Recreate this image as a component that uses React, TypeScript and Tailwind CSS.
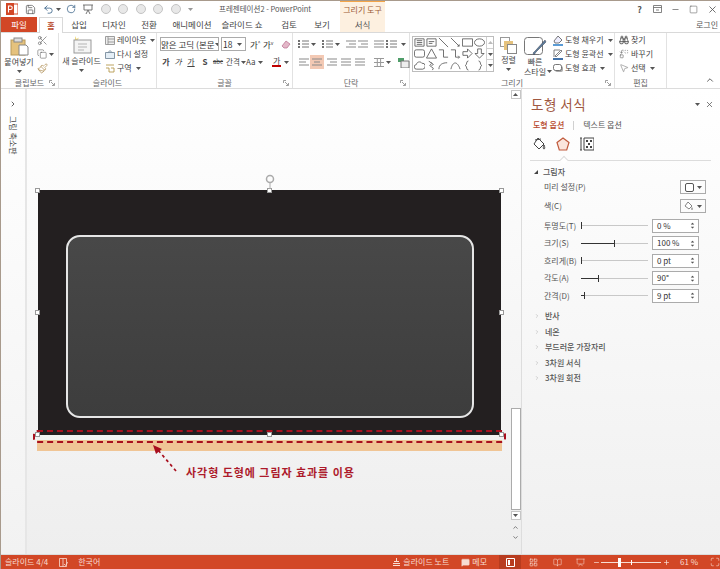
import React from "react";
import {
  Save, Undo2, RotateCw, Scissors, Copy, Paintbrush, Binoculars, MousePointer2, Replace, ChevronUp, X, Minus, Square,
  MessageSquare, LayoutGrid, BookOpen, Presentation, Maximize, ChevronDown, ChevronRight, Plus,
} from "lucide-react";

const font = "font-['Noto_Sans_CJK_KR','Noto_Sans',sans-serif]";

const Caret = ({ className = "" }: { className?: string }) => (
  <svg width="5" height="3" viewBox="0 0 5 3" className={`shrink-0 ${className}`}>
    <path d="M0 0h5L2.500 3z" fill="#555" />
  </svg>
);

const Launcher = () => (
  <svg width="6" height="6" viewBox="0 0 6 6" className="absolute right-[3px] bottom-[2px]">
    <path d="M.5 3V.5H3M2 2l3.200 3.200M5.500 3v2.500H3" fill="none" stroke="#888" strokeWidth=".8" />
  </svg>
);

const Group = ({ w, label, launcher, children }: { w: number; label: string; launcher?: boolean; children: React.ReactNode }) => (
  <div style={{ width: w }} className="relative flex h-full shrink-0 flex-col border-r border-[#e2e2e2]">
    <div className="flex h-[44px] items-stretch">{children}</div>
    <div className="flex h-[11px] items-center justify-center text-[8px] leading-none text-[#666]">{label}</div>
    {launcher && <Launcher />}
  </div>
);

const SmallRow = ({ icon, text, caret }: { icon: React.ReactNode; text: string; caret?: boolean }) => (
  <div className="flex h-[14px] items-center gap-[2px] whitespace-nowrap text-[8px] leading-none text-[#444]">
    <span className="flex w-[11px] shrink-0 justify-center">{icon}</span>
    {text}
    {caret && <Caret className="ml-[2px]" />}
  </div>
);

const LinesIcon = ({ kind }: { kind: number }) => {
  const paths = [
    "M0 2h10M0 5h7M0 8h10",
    "M0 2h10M2 5h6M0 8h10",
    "M0 2h10M3 5h7M0 8h10",
    "M0 2h10M0 5h10M0 8h10",
  ];
  return (
    <svg width="10" height="10" viewBox="0 0 10 10">
      <path d={paths[kind]} fill="none" stroke="#8a8a8a" strokeWidth="1.200" />
    </svg>
  );
};

const ListIcon = () => (
  <svg width="11" height="10" viewBox="0 0 11 10">
    <path d="M4 2h7M4 5h7M4 8h7" stroke="#777" strokeWidth="1" />
    <path d="M0 2h2M0 5h2M0 8h2" stroke="#444" strokeWidth="1.400" />
  </svg>
);

const shapes = [
  "M1 2h10v8H1zM3 4h6M3 6h6M3 8h6",
  "M1 2h10v8H1zM3 5h6M3 7h4",
  "M1 1l10 10",
  "M1 1l9 9M8 10h2v-2",
  "M.5 2h11v8H.5z",
  "M6 2c3 0 5.500 1.800 5.500 4S9 10 6 10 .5 8.200.5 6 3 2 6 2z",
  "M2.500 2h7a2 2 0 0 1 2 2v4a2 2 0 0 1-2 2h-7a2 2 0 0 1-2-2V4a2 2 0 0 1 2-2z",
  "M6 1l5.500 10H.5z",
  "M1 2h5v8h5",
  "M1 2h5v8h4M9 8.500l1.500 1.500L9 11.500",
  "M1 4h5V1l5 5-5 5V8H1z",
  "M4 1h4v5h3l-5 5-5-5h3z",
  "M3 10a2.500 2.500 0 0 1-.5-5C3 2 7 1 8.500 3.500A3.200 3.200 0 0 1 9.500 10z",
  "M3 1l3 3-2 2 4 3-1 2M5 2l3 3-2 1",
  "M1 10C1 5 5 3 10 3",
  "M1 10c2-9 7-9 10 0",
  "M7 1C4 1 6 5.500 3.500 6 6 6.500 4 11 7 11",
  "M5 1c3 0 1 4.500 3.500 5C6 6.500 8 11 5 11",
];

const Gallery = () => (
  <div className="mt-[3px] ml-[2px] flex h-[36px] w-[82px] shrink-0 border border-[#bdbdbd] bg-white">
    <div className="grid h-full w-[73px] grid-cols-6 grid-rows-3 px-[1px]">
      {shapes.map((d, i) => (
        <svg key={i} width="11" height="11" viewBox="0 0 12 12" className="m-auto">
          <path d={d} fill="none" stroke="#555" strokeWidth=".9" />
        </svg>
      ))}
    </div>
    <div className="flex w-[7px] flex-col border-l border-[#d0d0d0]">
      <div className="flex flex-1 items-center justify-center"><Caret className="rotate-180 opacity-40" /></div>
      <div className="flex flex-1 items-center justify-center border-y border-[#d0d0d0]"><Caret /></div>
      <div className="flex flex-1 items-center justify-center"><Caret /></div>
    </div>
  </div>
);

const TitleBar = () => (
  <div className="relative flex h-[16px] items-center bg-white">
    <svg width="12" height="12" viewBox="0 0 12 12" className="ml-[5px]">
      <rect x="5" y="1" width="7" height="10" fill="#fff" stroke="#d24726" />
      <rect x="0" y="0" width="8" height="12" fill="#d24726" />
      <path d="M2.500 9.500V3h2a1.500 1.500 0 0 1 0 3.500h-2" fill="none" stroke="#fff" strokeWidth="1.100" />
    </svg>
    <Save size={11} strokeWidth={1.6} className="ml-[7px] text-[#555]" />
    <Undo2 size={11} strokeWidth={1.6} className="ml-[7px] text-[#1f4e79]" />
    <Caret className="ml-[2px]" />
    <RotateCw size={10} strokeWidth={1.6} className="ml-[5px] text-[#1f4e79]" />
    <svg width="10" height="11" viewBox="0 0 10 11" className="ml-[7px]">
      <path d="M0 1h10M1 1v5h8V1M5 6l-2 4M5 6l2 4" fill="none" stroke="#666" strokeWidth=".9" />
    </svg>
    {[0, 1, 2, 3, 4].map((i) => (
      <span key={i} className="ml-[7.500px] h-[10px] w-[10px] rounded-full border border-[#c4c4c4] bg-[#e8e8e8]" />
    ))}
    <Caret className="ml-[7px] opacity-60" />
    <span className="absolute left-[218px] text-[7.500px] leading-none whitespace-nowrap text-[#555]">프레젠테이션2 - PowerPoint</span>
    <div className="absolute top-[-1px] left-[339px] flex h-[17px] w-[45px] items-center justify-center border-t-2 border-[#f3a54a] bg-[#fdf0e0] text-[8px] leading-none whitespace-nowrap text-[#9a5a36]">그리기 도구</div>
    <div className="ml-auto flex items-center gap-[9px] pr-[2px] text-[#555]">
      <span className="w-[9px] text-center text-[9px] leading-none font-bold">?</span>
      <svg width="9" height="8" viewBox="0 0 9 8"><path d="M.5.500h8v7h-8zM.5 2.500h8M3 5h3" fill="none" stroke="#666" strokeWidth=".8" /></svg>
      <Minus size={9} strokeWidth={1.8} />
      <Square size={9} strokeWidth={1.4} />
      <X size={11} strokeWidth={1.8} />
    </div>
  </div>
);

const tabs: [string, number][] = [
  ["삽입", 34], ["디자인", 36], ["전환", 34], ["애니메이션", 52], ["슬라이드 쇼", 48], ["검토", 46], ["보기", 20],
];

const TabBar = () => (
  <div className="flex h-[16px] border-b border-[#d9d9d9] bg-white text-[8.500px] leading-none text-[#444]">
    <div className="flex w-[36px] items-center justify-center bg-[#d24726] text-white">파일</div>
    <div className="z-10 ml-[2px] flex h-[16px] w-[24px] items-center justify-center border-x border-t border-[#d9d9d9] bg-white font-medium text-[#b7472a]">홈</div>
    {tabs.map(([t, w], i) => (
      <div key={t} style={{ width: w }} className={`flex items-center justify-center ${i === 0 ? "ml-[-1px]" : ""}`}>{t}</div>
    ))}
    <div className="ml-[8px] flex w-[45px] items-center justify-center bg-[#fdf0e0] text-[#555]">서식</div>
    <div className="ml-auto flex items-center pr-[2px] text-[8px] text-[#555]">로그인</div>
  </div>
);

const Ribbon = () => (
  <div className="relative flex h-[56px] border-b border-[#dcdcdc] bg-white">
    <Group w={58} label="클립보드" launcher>
      <div className="flex w-[36px] flex-col items-center pt-[4px]">
        <svg width="19" height="19" viewBox="0 0 19 19">
          <rect x="1" y="3" width="14" height="15" fill="#e5c27d" stroke="#b89a5c" />
          <rect x="4" y="1" width="8" height="4" fill="#ddd" stroke="#888" />
          <path d="M9 8h7l2 2v8H9z" fill="#fff" stroke="#888" />
        </svg>
        <span className="mt-[2px] text-[8px] leading-none whitespace-nowrap text-[#444]">붙여넣기</span>
        <Caret className="mt-[4px]" />
      </div>
      <div className="flex flex-col items-start text-[#555]">
        <div className="flex h-[14px] items-center"><Scissors size={11} strokeWidth={1.3} /></div>
        <div className="flex h-[14px] items-center gap-[2px]"><Copy size={10} strokeWidth={1.3} /><Caret /></div>
        <div className="flex h-[14px] items-center"><Paintbrush size={11} strokeWidth={1.4} className="text-[#a88344]" /></div>
      </div>
    </Group>
    <Group w={98} label="슬라이드">
      <div className="flex w-[45px] flex-col items-center pt-[3px]">
        <svg width="20" height="18" viewBox="0 0 20 18">
          <path d="M3 0l1.500 3L7 1.500 5.500 4 8 5H3z" fill="#f0d878" />
          <rect x="2" y="4" width="17" height="13" fill="#f4f4f4" stroke="#9a9a9a" />
          <path d="M6 8h9M6 11h9M6 14h6" stroke="#b4b4b4" />
        </svg>
        <span className="mt-[3px] text-[8px] leading-none whitespace-nowrap text-[#444]">새 슬라이드</span>
        <Caret className="mt-[4px]" />
      </div>
      <div className="flex flex-col">
        <SmallRow text="레이아웃" caret icon={<svg width="10" height="9" viewBox="0 0 10 9"><path d="M.5.500h9v8h-9zM3 .5v8M3 3h6.500M3 6h6.500" fill="#eee" stroke="#888" strokeWidth=".8" /></svg>} />
        <SmallRow text="다시 설정" icon={<svg width="10" height="9" viewBox="0 0 10 9"><path d="M.5 2.500h9v6h-9zM3 2.500L5 .5l2 2" fill="#e4eef6" stroke="#6a7f90" strokeWidth=".8" /></svg>} />
        <SmallRow text="구역" caret icon={<svg width="10" height="9" viewBox="0 0 10 9"><path d="M1 1h8M1 4h3v4h5V4H6" fill="none" stroke="#b59a4e" strokeWidth=".9" /></svg>} />
      </div>
    </Group>
    <Group w={136} label="글꼴" launcher>
      <div className="flex w-full flex-col pt-[4px] pl-[3px]">
        <div className="flex h-[14px] items-center text-[8.500px] leading-none text-[#333]">
          <div className="flex h-[14px] w-[59px] items-center justify-between overflow-hidden border border-[#ababab] pr-[2px] whitespace-nowrap">맑은 고딕 (본문<Caret /></div>
          <div className="ml-[2px] flex h-[14px] w-[25px] items-center justify-between border border-[#ababab] pr-[3px] pl-[1px]">18<Caret /></div>
          <span className="ml-[4px] w-[13px]">가<sup className="text-[5px]">^</sup></span>
          <span className="w-[14px]">가<sup className="text-[5px]">v</sup></span>
          <svg width="10" height="10" viewBox="0 0 10 10" className="ml-[4px]"><path d="M1 7l4-5 4 3-3 4H3z" fill="#e3b7c8" stroke="#b76b8c" strokeWidth=".7" /></svg>
        </div>
        <div className="mt-[4px] flex h-[14px] items-center text-[8px] leading-none whitespace-nowrap text-[#444]">
          <span className="w-[12px] shrink-0 text-center font-bold">가</span>
          <span className="w-[12px] shrink-0 text-center italic">가</span>
          <span className="w-[14px] shrink-0 text-center underline">가</span>
          <span className="w-[14px] shrink-0 text-center font-bold">S</span>
          <span className="w-[12px] shrink-0 text-center text-[6px] line-through">abc</span>
          <span className="flex w-[20px] shrink-0 items-center gap-[1px] pl-[2px] text-[7.500px]">간격<Caret /></span>
          <span className="flex w-[24px] shrink-0 items-center gap-[2px] pl-[2px]">Aa<Caret /></span>
          <span className="ml-[4px] flex shrink-0 items-center gap-[3px]"><span className="border-b-2 border-[#c00000] px-[1px]">가</span><Caret /></span>
        </div>
      </div>
    </Group>
    <Group w={117} label="단락" launcher>
      <div className="flex flex-col pt-[4px] pl-[5px]">
        <div className="flex h-[14px] items-center gap-[2px]">
          <ListIcon /><Caret className="mr-[4px]" /><ListIcon /><Caret className="mr-[4px]" />
          <LinesIcon kind={2} /><span className="mr-[4px]"><LinesIcon kind={2} /></span>
          <LinesIcon kind={3} /><span className="mr-[2px]"><ListIcon /></span><Caret />
          <svg width="10" height="12" viewBox="0 0 10 12" className="ml-[4px]"><path d="M1 1v10M3 1v10M6 2h4M6 6h4M6 10h4" stroke="#666" strokeWidth=".9" /></svg><Caret />
        </div>
        <div className="mt-[4px] flex h-[14px] items-center">
          <span className="flex w-[11px] justify-center"><LinesIcon kind={0} /></span>
          <span className="ml-[1px] flex h-[14px] w-[14px] items-center justify-center bg-[#f3c9b4]"><LinesIcon kind={1} /></span>
          <span className="ml-[2px] flex w-[12px] justify-center"><LinesIcon kind={2} /></span>
          <span className="ml-[2px] flex w-[12px] justify-center"><LinesIcon kind={3} /></span>
          <span className="ml-[2px] flex w-[11px] justify-center"><LinesIcon kind={3} /></span>
          <span className="ml-[9px] flex items-center gap-[2px]"><svg width="10" height="9" viewBox="0 0 10 9"><path d="M0 .5h10M0 4.500h10M0 8.500h10M3.300 0v9M6.600 0v9" stroke="#999" /></svg><Caret /></span>
          <span className="ml-[7px] flex items-center gap-[2px]"><svg width="12" height="11" viewBox="0 0 12 11"><path d="M0 1h6v4H0z" fill="#4f9d69" /><path d="M3 4h8v7H3z" fill="#eee" stroke="#777" /></svg><Caret /></span>
        </div>
      </div>
    </Group>
    <Group w={205} label="그리기" launcher>
      <Gallery />
      <div className="ml-[4px] flex w-[21px] shrink-0 flex-col items-center pt-[4px]">
        <svg width="17" height="17" viewBox="0 0 17 17">
          <rect x=".5" y=".5" width="9" height="9" fill="#fff" stroke="#999" />
          <rect x="4" y="4" width="9" height="9" fill="#e5c27d" />
          <rect x="7.500" y="7.500" width="9" height="9" fill="#fff" stroke="#888" />
        </svg>
        <span className="mt-[2px] text-[8px] leading-none text-[#444]">정렬</span>
        <Caret className="mt-[4px]" />
      </div>
      <div className="ml-[4px] flex w-[24px] shrink-0 flex-col items-center pt-[4px]">
        <svg width="23" height="19" viewBox="0 0 23 19">
          <rect x=".5" y=".5" width="18" height="17" rx="3" fill="#fff" stroke="#777" />
          <path d="M22 5L12 15l-2 3-1-2 3-3L21 3z" fill="#5a7c9a" stroke="#445" strokeWidth=".5" />
        </svg>
        <span className="mt-[1px] text-[8px] leading-[10px] text-[#444]">빠른</span>
        <span className="text-[8px] leading-[9px] whitespace-nowrap text-[#444]">스타일</span>
      </div>
      <Caret className="mt-[37px]" />
      <div className="flex flex-col">
        <SmallRow text="도형 채우기" caret icon={<svg width="10" height="11" viewBox="0 0 10 11"><path d="M5 1l4 4-3 3H2L1 6z" fill="#eef" stroke="#555" strokeWidth=".8" /><path d="M0 9h10v2H0z" fill="#5b9bd5" /></svg>} />
        <SmallRow text="도형 윤곽선" caret icon={<svg width="10" height="11" viewBox="0 0 10 11"><path d="M1 1h6M1 1v7M2 7l6-6 1 1-6 6z" fill="none" stroke="#666" strokeWidth=".8" /><path d="M0 9h10v2H0z" fill="#4472a8" /></svg>} />
        <SmallRow text="도형 효과" caret icon={<svg width="10" height="9" viewBox="0 0 10 9"><rect x="2" y="2" width="8" height="6" rx="2" fill="#aaa" /><rect x=".5" y=".5" width="8" height="6" rx="2" fill="#fff" stroke="#555" strokeWidth=".8" /></svg>} />
      </div>
    </Group>
    <Group w={52} label="편집">
      <div className="flex flex-col pl-[3px]">
        <SmallRow text="찾기" icon={<Binoculars size={10} strokeWidth={2} className="text-[#444]" />} />
        <SmallRow text="바꾸기" icon={<Replace size={10} strokeWidth={1.3} className="text-[#555]" />} />
        <SmallRow text="선택" caret icon={<MousePointer2 size={10} strokeWidth={1.2} className="text-[#666]" />} />
      </div>
    </Group>
    <ChevronUp size={10} strokeWidth={2} className="absolute right-[5px] bottom-[3px] text-[#444]" />
  </div>
);

const Handle = ({ className }: { className: string }) => (
  <span className={`absolute h-[5px] w-[5px] border border-[#999] bg-white ${className}`} />
);

const Slide = () => (
  <div className="relative mt-[101px] ml-[11px] w-[463px]">
    <div className="h-[245px] bg-[#231f20] pt-[45px] pl-[28px]">
      <div className="h-[183px] w-[408px] rounded-[14px] border-2 border-[#e6e6e6] bg-gradient-to-b from-[#484848] to-[#3d3d3d]" />
    </div>
    <div className="mt-[5px] ml-[-1px] h-[11px] w-[465px] bg-[#f0c595]" />
    <Handle className="top-[-2px] left-[-3px]" />
    <Handle className="top-[-2px] left-[229px]" />
    <Handle className="top-[-2px] right-[-3px]" />
    <Handle className="top-[120px] left-[-3px]" />
    <Handle className="top-[120px] right-[-3px]" />
    <Handle className="bottom-[14px] left-[-3px]" />
    <Handle className="bottom-[14px] left-[229px]" />
    <Handle className="right-[-3px] bottom-[14px]" />
    <svg width="12" height="17" viewBox="0 0 12 17" className="absolute top-[-16px] left-[226px]">
      <circle cx="6" cy="5" r="3.500" fill="none" stroke="#aaa" strokeWidth="1.500" />
      <path d="M6 9v6" stroke="#aaa" strokeWidth="1" />
    </svg>
    <div className="absolute top-[240px] left-[-5px] h-[13px] w-[473px] rounded-[4px] border-2 border-dashed border-[#a80f1e]" />
    <svg width="26" height="28" viewBox="0 0 26 28" className="absolute top-[255px] left-[114px]">
      <path d="M24 26L6 5" fill="none" stroke="#a80f1e" strokeWidth="1.700" strokeDasharray="3 3" />
      <path d="M1 0l9 4-6 5z" fill="#a80f1e" />
    </svg>
    <span className="absolute top-[277px] left-[148px] text-[11px] leading-none font-bold tracking-[.95px] whitespace-nowrap text-[#ad1a2b]">
      사각형 도형에 그림자 효과를 이용
    </span>
  </div>
);

const Scrollbar = () => (
  <div className="flex w-[11px] shrink-0 flex-col items-center border-r border-[#dddddd] pr-[1px] pb-[12px]">
    <div className="mt-[1px] flex h-[9px] w-[10px] items-center justify-center border border-[#c6c6c6] bg-white"><Caret className="rotate-180" /></div>
    <div className="flex-1" />
    <div className="h-[102px] w-[10px] border border-[#ababab] bg-white" />
    <div className="mt-[1px] flex h-[9px] w-[10px] items-center justify-center border border-[#c6c6c6] bg-white"><Caret /></div>
    <div className="mt-[2px] flex h-[10px] items-center text-[#555]"><ChevronUp size={7} strokeWidth={2.500} /></div>
    <div className="flex h-[10px] items-center text-[#555]"><ChevronDown size={7} strokeWidth={2.500} /></div>
  </div>
);

const Spin = () => (
  <span className="flex flex-col gap-[1px]"><Caret className="rotate-180 scale-75" /><Caret className="scale-75" /></span>
);

const sliders: [string, string, number][] = [
  ["투명도(T)", "0 %", 0],
  ["크기(S)", "100 %", 33],
  ["흐리게(B)", "0 pt", 0],
  ["각도(A)", "90°", 17],
  ["간격(D)", "9 pt", 3],
];

const SliderRow = ({ label, value, pos }: { label: string; value: string; pos: number }) => (
  <div className="flex h-[17.500px] items-center pl-[21px] text-[8px] leading-none text-[#555]">
    <span className="w-[37px] whitespace-nowrap">{label}</span>
    <div className="relative h-[1px] w-[67px] bg-[#c8c8c8]">
      <div style={{ width: pos }} className="h-[1px] bg-[#333]" />
      <span style={{ left: pos }} className="absolute top-[-3px] h-[7px] w-[1px] bg-[#333]" />
    </div>
    <div className="ml-[4px] flex h-[14px] w-[47px] items-center justify-between border border-[#ababab] bg-white pr-[3px] pl-[4px] text-[#333]">
      {value}<Spin />
    </div>
  </div>
);

const FormatPane = () => (
  <div className="flex w-[198px] shrink-0 flex-col bg-gradient-to-b from-white to-[#f0f0f0] pt-[7px] pl-[8px]">
    <div className="flex h-[17px] items-center justify-between pr-[6px] pl-[1px]">
      <span className="text-[13.500px] leading-none tracking-[.5px] text-[#a0573f]">도형 서식</span>
      <span className="flex items-center gap-[5px] text-[#555]"><Caret /><X size={9} strokeWidth={2} /></span>
    </div>
    <div className="mt-[6px] flex h-[12px] items-center pl-[3px] text-[8px] leading-none">
      <span className="font-medium text-[#b7472a]">도형 옵션</span>
      <span className="mx-[9px] h-[9px] w-[1px] bg-[#d0d0d0]" />
      <span className="text-[#555]">텍스트 옵션</span>
    </div>
    <div className="mt-[4px] flex h-[18px] items-center gap-[10px] pl-[2px]">
      <svg width="14" height="14" viewBox="0 0 14 14"><path d="M6 1l6 6-5 5L2 7zM3 3l6-1M12 8c1 2 1 4 0 4s-1-2 0-4" fill="#fff" stroke="#444" /></svg>
      <svg width="14" height="14" viewBox="0 0 14 14"><path d="M7 1l6 4.500-2.300 7.500H3.300L1 5.500z" fill="#fbe5dc" stroke="#c05a3c" strokeWidth="1.200" /></svg>
      <svg width="14" height="14" viewBox="0 0 14 14"><path d="M1 1v12M0 1h2M0 13h2M4 1h10v12H4z" fill="none" stroke="#444" /><path d="M6 3h2v2H6zM10 3h2v2h-2zM6 9h2v2H6zM10 9h2v2h-2zM8 6h2v2H8z" fill="#444" /></svg>
    </div>
    <div className="relative mt-[7px] mr-[9px] h-[1px] bg-[#dcdcdc]">
      <span className="absolute top-[-3px] left-[31px] h-[6px] w-[6px] rotate-45 border-t border-l border-[#dcdcdc] bg-white" />
    </div>
    <div className="mt-[5px] flex h-[12px] items-center pl-[4px] text-[8px] leading-none font-medium text-[#555]">
      <span className="mr-[5px] h-0 w-0 border-b-[4px] border-l-[4px] border-b-[#444] border-l-transparent" />
      그림자
    </div>
    <div className="flex h-[18px] items-center pl-[14px] text-[8px] leading-none text-[#555]">
      미리 설정(P)
      <div className="mr-[14px] ml-auto flex h-[14px] w-[26px] items-center justify-center gap-[3px] border border-[#ababab]">
        <span className="h-[9px] w-[9px] rounded-[2px] border border-[#555] bg-white" /><Caret />
      </div>
    </div>
    <div className="flex h-[20px] items-center pl-[14px] text-[8px] leading-none text-[#555]">
      색(C)
      <div className="mr-[14px] ml-auto flex h-[14px] w-[26px] items-center justify-center gap-[3px] border border-[#ababab]">
        <svg width="10" height="10" viewBox="0 0 10 10"><path d="M4 1l4 4-3 3-4-3z" fill="#fff" stroke="#666" strokeWidth=".8" /><path d="M8 6c1 1.500 1 3 0 3s-1-1.500 0-3" fill="#888" /></svg><Caret />
      </div>
    </div>
    <div className="mt-[1px] ml-[-7px]">
      {sliders.map(([l, v, p]) => <SliderRow key={l} label={l} value={v} pos={p} />)}
    </div>
    <div className="mt-[4px] flex flex-col text-[8px] leading-none font-medium text-[#555]">
      {["반사", "네온", "부드러운 가장자리", "3차원 서식", "3차원 회전"].map((t) => (
        <div key={t} className="flex h-[15.500px] items-center pl-[4px]">
          <ChevronRight size={6} strokeWidth={2} className="mr-[5px] text-[#aaa]" />{t}
        </div>
      ))}
    </div>
  </div>
);

const StatusBar = () => (
  <div className="flex h-[14px] items-center bg-[#d24726] pl-[4px] text-[8px] leading-none whitespace-nowrap text-[#f7ddd3]">
    <span>슬라이드 4/4</span>
    <svg width="9" height="9" viewBox="0 0 9 9" className="ml-[11px] shrink-0"><path d="M.5.500h7v8h-7zM4 .5v8M5 6l1.500 1.500L9 4" fill="none" stroke="#f7ddd3" strokeWidth=".8" /></svg>
    <span className="ml-[10px]">한국어</span>
    <span className="ml-[293px] flex items-center gap-[3px]">
      <svg width="7" height="9" viewBox="0 0 7 9"><path d="M3.500 0v3M1 3.500h5M0 5.500h7M0 7.500h7" stroke="#f7ddd3" /></svg>
      슬라이드 노트
    </span>
    <span className="ml-[12px] flex items-center gap-[2px]"><MessageSquare size={9} fill="#f7ddd3" strokeWidth={1} />메모</span>
    <div className="ml-[12px] flex h-[14px] w-[22px] shrink-0 items-center justify-center bg-[#b83c1f]">
      <svg width="9" height="9" viewBox="0 0 9 9"><path d="M.5.500h8v8h-8z" fill="none" stroke="#fff" /><path d="M2 2h2v5H2z" fill="#fff" /></svg>
    </div>
    <LayoutGrid size={9} strokeWidth={1.800} className="ml-[8px] shrink-0" />
    <BookOpen size={9} strokeWidth={1.400} className="ml-[15px] shrink-0" />
    <Presentation size={9} strokeWidth={1.400} className="ml-[14px] shrink-0" />
    <Minus size={7} strokeWidth={2.500} className="ml-[8px] shrink-0" />
    <div className="relative ml-[1px] h-[1px] w-[60px] shrink-0 bg-[#f7ddd3]">
      <span className="absolute top-[-4px] left-[17px] h-[9px] w-[3px] bg-white" />
      <span className="absolute top-[-2px] left-[30px] h-[5px] w-[1px] bg-white" />
    </div>
    <Plus size={7} strokeWidth={2.500} className="ml-[2px] shrink-0" />
    <span className="ml-[10px]">61 %</span>
    <Maximize size={10} strokeWidth={1.500} className="ml-[12px] shrink-0" />
  </div>
);

export default function App() {
  return (
    <div className={`flex h-[569px] w-[720px] flex-col overflow-hidden border-t border-l border-[#a89a8c] bg-white ${font}`}>
      <TitleBar />
      <TabBar />
      <Ribbon />
      <div className="flex min-h-0 flex-1 border-b border-[#dcdcdc]">
        <div className="flex w-[26px] shrink-0 flex-col items-center border-r-2 border-[#e6e6e6] bg-gradient-to-b from-white to-[#f2f2f2] pt-[11px] text-[#444]">
          <ChevronRight size={8} strokeWidth={2.500} />
          <span className="mt-[8px] text-[8px] leading-[8px] whitespace-nowrap [text-orientation:sideways] [writing-mode:vertical-rl]">그림 축소판</span>
        </div>
        <div className="flex min-w-0 flex-1 bg-gradient-to-b from-white to-[#eeeeee]">
          <div className="min-w-0 flex-1"><Slide /></div>
          <Scrollbar />
        </div>
        <FormatPane />
      </div>
      <StatusBar />
    </div>
  );
}
